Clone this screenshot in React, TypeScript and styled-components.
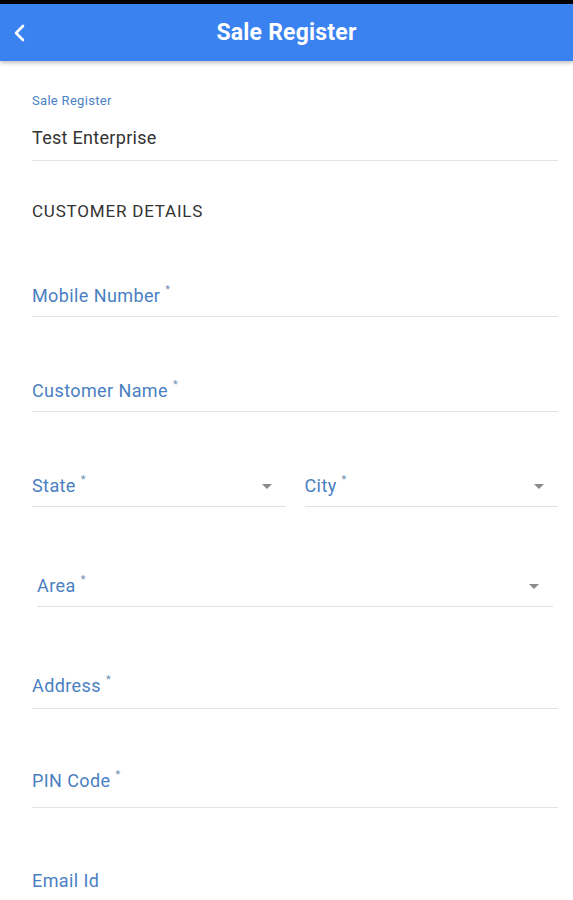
import React from "react";
import styled, { createGlobalStyle } from "styled-components";

const GlobalStyle = createGlobalStyle`
  body {
    margin: 0;
    background: #ffffff;
    font-family: Roboto, "Liberation Sans", sans-serif;
  }
`;

const StatusBar = styled.div`
  height: 4px;
  background-color: #000;
`;

const AppBar = styled.header`
  position: relative;
  display: flex;
  align-items: center;
  justify-content: center;
  height: 57px;
  background-color: #3a82f0;
  box-shadow: 0 2px 4px rgba(0, 0, 0, 0.25);
`;

const BackButton = styled.button`
  position: absolute;
  left: 8px;
  top: 50%;
  transform: translateY(-50%);
  display: flex;
  align-items: center;
  padding: 4px;
  border: none;
  background: transparent;
`;

const Title = styled.h1`
  margin: 0;
  color: #fff;
  font-size: 23px;
  font-weight: 700;
  letter-spacing: 0.2px;
`;

const Form = styled.main`
  display: flex;
  flex-direction: column;
  padding: 33px 15px 40px 32px;
`;

const SmallLabel = styled.div`
  font-size: 13px;
  line-height: 14px;
  letter-spacing: 0.3px;
  color: #4a82c4;
`;

const Value = styled.div`
  margin-top: 20px;
  padding-bottom: 12px;
  font-size: 18px;
  line-height: 20px;
  letter-spacing: 0.3px;
  color: #333;
  border-bottom: 1px solid #e2e2e2;
`;

const Section = styled.h2`
  margin: 40px 0 0;
  font-size: 17px;
  line-height: 20px;
  font-weight: 400;
  letter-spacing: 0.8px;
  color: #333;
`;

const Row = styled.div`
  display: flex;
  gap: 19px;
`;

const Field = styled.div<{ $top: number; $pad?: number; $inset?: number }>`
  flex: 1;
  display: flex;
  align-items: center;
  justify-content: space-between;
  margin-top: ${(p) => p.$top}px;
  margin-left: ${(p) => p.$inset ?? 0}px;
  margin-right: ${(p) => p.$inset ?? 0}px;
  padding-bottom: ${(p) => p.$pad ?? 10}px;
  border-bottom: 1px solid #e2e2e2;
`;

const Label = styled.span`
  font-size: 18px;
  line-height: 20px;
  letter-spacing: 0.4px;
  color: #4a7fc2;
`;

const Star = styled.sup`
  margin-left: 5px;
  font-size: 11px;
  line-height: 0;
  color: #6f8fb5;
  vertical-align: 9px;
`;

const Caret = styled.span`
  width: 0;
  height: 0;
  margin-right: 14px;
  border-left: 5px solid transparent;
  border-right: 5px solid transparent;
  border-top: 5px solid #8a8a8a;
`;

function Input({
  label,
  required,
  select,
  top,
  pad,
  inset,
}: {
  label: string;
  required?: boolean;
  select?: boolean;
  top: number;
  pad?: number;
  inset?: number;
}) {
  return (
    <Field $top={top} $pad={pad} $inset={inset}>
      <Label>
        {label}
        {required && <Star>*</Star>}
      </Label>
      {select && <Caret />}
    </Field>
  );
}

export default function App() {
  return (
    <>
      <GlobalStyle />
      <StatusBar />
      <AppBar>
        <BackButton aria-label="back">
          <svg width="16" height="20" viewBox="0 0 16 20">
            <path
              d="M11 3 L4 10 L11 17"
              fill="none"
              stroke="#fff"
              strokeWidth="2.6"
              strokeLinecap="round"
              strokeLinejoin="round"
            />
          </svg>
        </BackButton>
        <Title>Sale Register</Title>
      </AppBar>
      <Form>
        <SmallLabel>Sale Register</SmallLabel>
        <Value>Test Enterprise</Value>
        <Section>CUSTOMER DETAILS</Section>
        <Input label="Mobile Number" required top={65} />
        <Input label="Customer Name" required top={64} />
        <Row>
          <Input label="State" required select top={64} />
          <Input label="City" required select top={64} />
        </Row>
        <Input label="Area" required select top={69} pad={10} inset={5} />
        <Input label="Address" required top={69} pad={12} />
        <Input label="PIN Code" required top={62} pad={16} />
        <Input label="Email Id" top={63} pad={14} />
      </Form>
    </>
  );
}
